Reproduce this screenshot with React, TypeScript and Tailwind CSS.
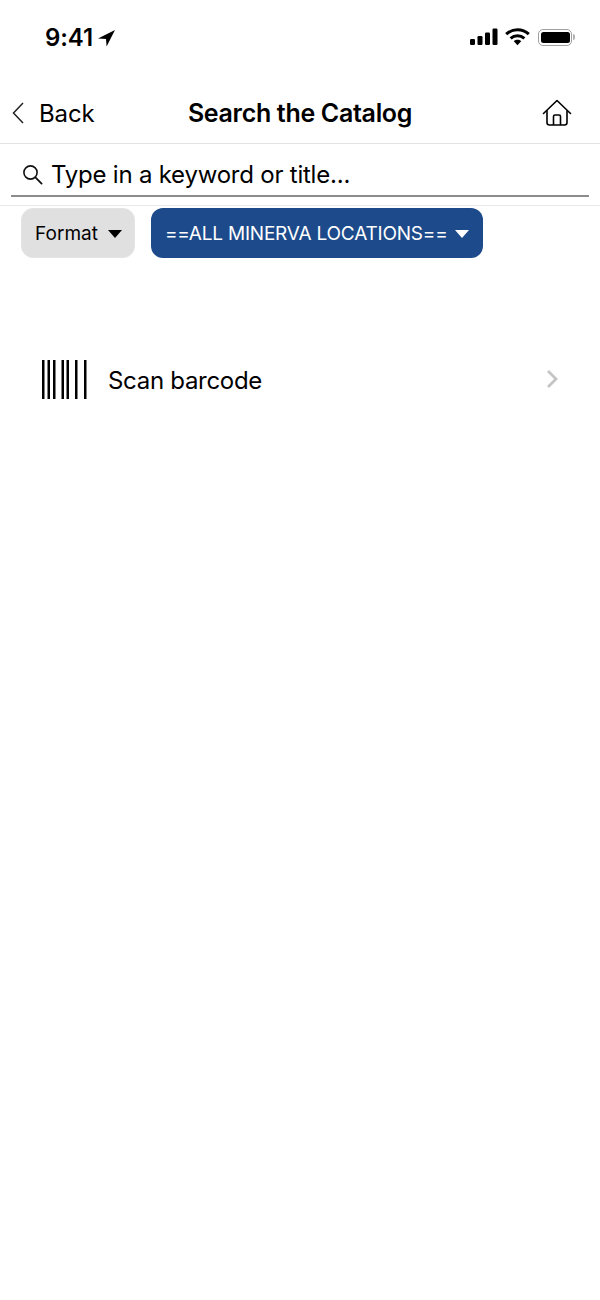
import React from "react";

const font = { fontFamily: "Inter, 'Liberation Sans', sans-serif" };

// x positions of the barcode strokes, they are not evenly spaced
const barcodeBars = [0, 5.5, 11, 19.5, 24.5, 33, 42];

const StatusBar = () => (
  <div className="flex h-[84px] items-start justify-between pl-[45px] pr-[25px] pt-[23px]">
    <div className="flex items-center gap-[5px]">
      <span className="text-[24px] font-semibold leading-[29px] tracking-[-0.1px] text-black">9:41</span>
      <svg width="17" height="17" viewBox="0 0 17 17" className="mt-[1px]">
        <path d="M17 0 L8.6 16.5 L8 9 L0 8.4 Z" fill="#000" />
      </svg>
    </div>
    <div className="mt-[5px] flex items-center gap-[8px]">
      {/* signal */}
      <svg width="28" height="18" viewBox="0 0 28 18">
        <rect x="0" y="11" width="5" height="6" rx="1.2" fill="#000" />
        <rect x="7.5" y="8" width="5" height="9" rx="1.2" fill="#000" />
        <rect x="15" y="4.5" width="5" height="12.5" rx="1.2" fill="#000" />
        <rect x="22.5" y="0.5" width="5" height="16.5" rx="1.2" fill="#000" />
      </svg>
      {/* wifi */}
      <svg width="25" height="18" viewBox="0 0 25 18" className="-ml-[1px]">
        <path d="M1.2 6.2 C7.5 0.2 17.5 0.2 23.8 6.2" fill="none" stroke="#000" strokeWidth="3" />
        <path d="M5.6 10.4 C9.6 6.8 15.4 6.8 19.4 10.4" fill="none" stroke="#000" strokeWidth="3" />
        <path d="M8.8 13.2 C10.9 11.4 14.1 11.4 16.2 13.2 L12.5 17.2 Z" fill="#000" />
      </svg>
      <div className="flex items-center gap-[1px]">
        <div className="flex h-[17px] w-[34px] items-center justify-center rounded-[5px] border-[1.5px] border-[#a0a0a0]">
          <div className="h-[11px] w-[29px] rounded-[2.5px] bg-black" />
        </div>
        <div className="h-[6px] w-[2px] rounded-r-full bg-[#b0b0b0]" />
      </div>
    </div>
  </div>
);

const Header = () => (
  <div className="flex h-[60px] items-center justify-between border-b border-[#e3e3e3] pb-[1px] pl-[12px] pr-[28px]">
    <div className="flex w-[136px] items-center gap-[15px]">
      <svg width="12" height="22" viewBox="0 0 12 22">
        <path d="M11 1 L1.5 11 L11 21" fill="none" stroke="#222" strokeWidth="1.5" />
      </svg>
      <span className="text-[24px] leading-[29px] tracking-[-0.1px] text-black">Back</span>
    </div>
    <span className="mt-[1px] text-[25px] font-semibold leading-[29px] tracking-[-0.32px] text-black">Search the Catalog</span>
    <div className="flex w-[120px] justify-end">
      <svg width="30" height="28" viewBox="0 0 30 28">
        <path d="M1.5 14.5 L15 1.5 L28.5 14.5" fill="none" stroke="#000" strokeWidth="1.6" strokeLinecap="round" strokeLinejoin="round" />
        <path d="M5 11.5 V23.5 Q5 26 7.5 26 H22.5 Q25 26 25 23.5 V11.5" fill="none" stroke="#000" strokeWidth="1.6" />
        <path d="M11.5 26 V17.5 Q11.5 16 13 16 H17 Q18.5 16 18.5 17.5 V26" fill="none" stroke="#000" strokeWidth="1.6" />
      </svg>
    </div>
  </div>
);

const SearchBar = () => (
  <div className="h-[62px] border-b border-[#e8e8e8] px-[11px] pt-[1px]">
    <div className="flex h-[52px] items-center gap-[8px] border-b-2 border-[#8c8c8c] pl-[11px] pt-[8px]">
      <svg width="21" height="21" viewBox="0 0 21 21">
        <circle cx="8.5" cy="8.5" r="6.6" fill="none" stroke="#111" strokeWidth="1.6" />
        <path d="M13.4 13.4 L19.6 19.6" stroke="#111" strokeWidth="1.8" strokeLinecap="round" />
      </svg>
      <span className="mt-[2px] text-[24px] leading-[30px] tracking-[-0.22px] text-black">Type in a keyword or title...</span>
    </div>
  </div>
);

const Filters = () => (
  <div className="flex gap-[16px] pl-[21px] pt-[2px]">
    <div className="flex h-[50px] w-[114px] items-center justify-center gap-[10px] rounded-[12px] border border-[#e4e4e4] bg-[#e0e0e0] pl-[1px] pt-[1px]">
      <span className="text-[19px] leading-[24px] text-black">Format</span>
      <div className="h-0 w-0 border-x-[7px] border-t-[8px] border-x-transparent border-t-black" />
    </div>
    <div className="flex h-[50px] w-[332px] items-center gap-[7px] rounded-[12px] bg-[#1c4a8a] pl-[14px] pt-[1px]">
      <span className="text-[19px] leading-[24px] tracking-[-0.2px] text-white">==ALL MINERVA LOCATIONS==</span>
      <div className="h-0 w-0 border-x-[7px] border-t-[8px] border-x-transparent border-t-white" />
    </div>
  </div>
);

const ScanRow = () => (
  <div className="mt-[101px] flex h-[42px] items-center pl-[42px] pr-[42px]">
    <svg width="45" height="39" viewBox="0 0 45 39" className="-mt-[2px]">
      {barcodeBars.map((x) => (
        <rect key={x} x={x} y="0" width="2.5" height="39" fill="#000" />
      ))}
    </svg>
    <span className="ml-[21px] mt-[1px] flex-1 text-[24px] leading-[30px] tracking-[-0.3px] text-black">Scan barcode</span>
    <svg width="12" height="20" viewBox="0 0 12 20" className="-mt-[2px]">
      <path d="M2 2 L10 10 L2 18" fill="none" stroke="#c4c4c4" strokeWidth="2.8" />
    </svg>
  </div>
);

export default function App() {
  return (
    <div className="h-[1300px] w-[600px] overflow-hidden bg-white" style={font}>
      <StatusBar />
      <Header />
      <SearchBar />
      <Filters />
      <ScanRow />
    </div>
  );
}
